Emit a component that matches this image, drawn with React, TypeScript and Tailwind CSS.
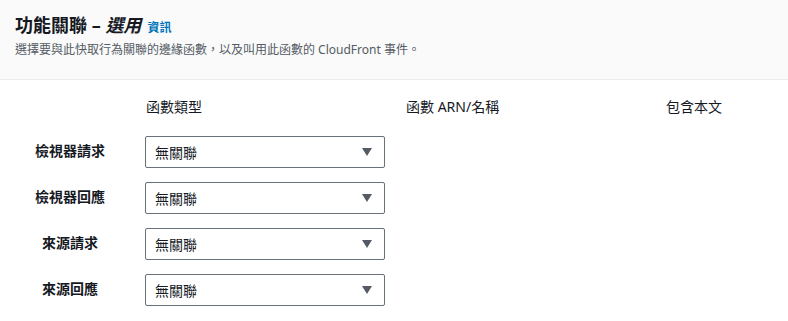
const rows = ["檢視器請求", "檢視器回應", "來源請求", "來源回應"];

function SelectBox() {
  return (
    <div className="w-[240px] h-[32px] border border-[#687078] rounded-[2px] bg-white flex items-center justify-between pl-[9px] pr-[12px]">
      <span className="text-[14px] text-[#16191f]">無關聯</span>
      <svg width="10" height="8" viewBox="0 0 10 8">
        <path d="M0 0 H10 L5 8 Z" fill="#545b64" />
      </svg>
    </div>
  );
}

export default function App() {
  return (
    <div
      className="w-[788px] h-[321px] bg-white text-[#16191f] overflow-hidden"
      style={{ fontFamily: '"Noto Sans", "Noto Sans CJK TC", sans-serif' }}
    >
      <div className="bg-[#fafafa] border-b border-[#eaeded] h-[80px] px-[15px] pt-[13px]">
        <div className="flex items-baseline gap-[6px]">
          <h2 className="text-[18px] leading-[24px] font-bold">
            功能關聯 – <i>選用</i>
          </h2>
          <a className="text-[12px] font-bold text-[#0073bb]">資訊</a>
        </div>
        <p className="text-[12px] leading-[16px] mt-[5px] text-[#545b64]">
          選擇要與此快取行為關聯的邊緣函數，以及叫用此函數的 CloudFront 事件。
        </p>
      </div>

      <div className="grid grid-cols-[145px_260px_260px_1fr] items-center gap-y-[14px] pt-[17px]">
        <div />
        <div className="pl-[1px] text-[14px] leading-[20px] mb-[5px]">函數類型</div>
        <div className="pl-[1px] text-[14px] leading-[20px] mb-[5px]">函數 ARN/名稱</div>
        <div className="pl-[1px] text-[14px] leading-[20px] mb-[5px]">包含本文</div>
        {rows.map((r) => (
          <div key={r} className="contents">
            <div className="pr-[5px] text-center text-[14px] font-bold -mt-[4px]">{r}</div>
            <SelectBox />
            <div />
            <div />
          </div>
        ))}
      </div>
    </div>
  );
}
